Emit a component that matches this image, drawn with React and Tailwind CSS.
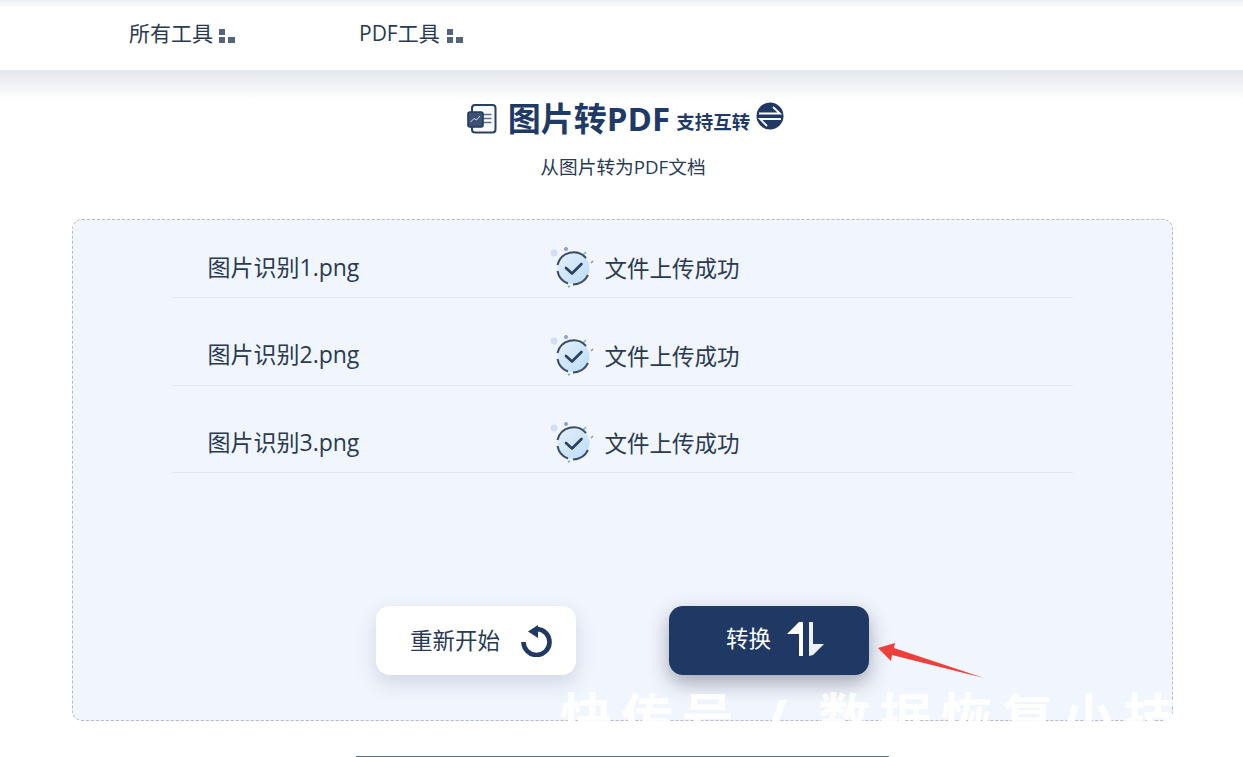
import React from 'react';

const files = ['图片识别1.png', '图片识别2.png', '图片识别3.png'];

const MenuDots = () => (
  <svg width="16" height="15" viewBox="0 0 16 15" className="shrink-0">
    <rect x="0" y="0" width="6" height="6" fill="#56637c" />
    <rect x="0" y="8" width="6" height="6" fill="#56637c" />
    <rect x="9" y="8" width="7" height="6" fill="#56637c" />
  </svg>
);

const DocIcon = () => (
  <svg width="30" height="30" viewBox="0 0 30 30" fill="none">
    <rect x="5" y="1" width="23.5" height="27.5" rx="3" fill="#f8fafc" stroke="#2a3f66" strokeWidth="2" />
    <path d="M16 10.5h8.5M16 14.5h8.5M16 18.5h8.5" stroke="#5d7090" strokeWidth="1.4" />
    <rect x="1" y="8" width="15" height="15" rx="2" fill="#3c5175" stroke="#24385c" strokeWidth="1.6" />
    <path d="M3.5 18l3.5-3.5 2.5 1.5 3.5-4" stroke="#dbe2ee" strokeWidth="1" />
  </svg>
);

const SwapBadge = () => (
  <svg width="28" height="28" viewBox="0 0 28 28">
    <circle cx="14" cy="14" r="13.5" fill="#1f3864" />
    <path d="M3 11.5h21L17 5M25 17H4l7 7" fill="none" stroke="#fff" strokeWidth="1.8" />
  </svg>
);

const SuccessIcon = () => (
  <svg width="46" height="46" viewBox="0 0 46 46" fill="none" className="shrink-0">
    <defs>
      <linearGradient id="okFill" x1="0" y1="0" x2="1" y2="1">
        <stop offset="0" stopColor="#e4f0fc" />
        <stop offset="1" stopColor="#bcdcf8" />
      </linearGradient>
    </defs>
    <circle cx="5" cy="9" r="3.5" fill="#d3ddf3" />
    <circle cx="17" cy="5" r="2" fill="#8c9fd6" />
    <path d="M37 8l-3 3" stroke="#7fb2e0" strokeWidth="1.6" />
    <path d="M44 17l-2 2" stroke="#8a9ab5" strokeWidth="1.6" />
    <circle cx="24.5" cy="24" r="16" fill="url(#okFill)" />
    <path d="M37 14A16.5 16.5 0 0 0 8.5 21M8.5 27A16.5 16.5 0 0 0 19 39.5M24 40.5A16.5 16.5 0 0 0 39 31" stroke="#3d4c66" strokeWidth="2" />
    <path d="M17 24l6 5.5 9.5-9.5" stroke="#2c3e5c" strokeWidth="2.6" strokeLinecap="round" strokeLinejoin="round" />
    <path d="M19 43l2-1" stroke="#6ea6d8" strokeWidth="1.6" />
  </svg>
);

const RestartIcon = () => (
  <svg width="31" height="32" viewBox="0 0 31 32" fill="none">
    <path d="M2.5 17A13 13 0 1 0 16 4" stroke="#1f3864" strokeWidth="4.6" />
    <path d="M7 6.5L17 0v13z" fill="#1f3864" />
  </svg>
);

const ConvertIcon = () => (
  <svg width="37" height="34" viewBox="0 0 37 34">
    <path d="M16 0h-4L0 12h12v22h4z" fill="#fff" />
    <path d="M22 0h4v22h11L26 33l-4 1z" fill="#eef2f8" />
  </svg>
);

const Arrow = () => (
  <svg width="108" height="36" viewBox="0 0 108 36" className="absolute left-[876px] top-[642px]">
    <path d="M2 6L19 1l-1 5 90 30L16 13l-1 6z" fill="#ee3f3a" />
  </svg>
);

export default function App() {
  return (
    <div
      className="relative h-[757px] w-[1243px] overflow-hidden bg-white text-[#2a3a52]"
      style={{ fontFamily: '"Open Sans", "Noto Sans CJK SC", sans-serif' }}
    >
      {/* top nav */}
      <div className="relative h-[70px] bg-gradient-to-b from-[#eceef2] via-white via-[12%] to-white">
        <div className="flex h-full items-center pb-[3px] pl-[129px]">
          <div className="flex w-[230px] items-center gap-[6px] text-[21px] font-normal">
            <span>所有工具</span>
            <div className="mt-[6px]"><MenuDots /></div>
          </div>
          <div className="flex items-center gap-[7px] text-[21px] font-normal">
            <span>PDF工具</span>
            <div className="mt-[6px]"><MenuDots /></div>
          </div>
        </div>
      </div>
      <div className="h-[30px] bg-gradient-to-b from-[#e3e6ed] to-white" />

      {/* title */}
      <div className="-mt-[2px] flex items-center justify-center pl-[8px]">
        <DocIcon />
        <h1 className="ml-[11px] text-[33px] font-bold leading-[42px] text-[#1f3a66]">图片转PDF</h1>
        <span className="ml-[6px] mt-[6px] text-[18.5px] font-bold text-[#1f3a66]">支持互转</span>
        <div className="-mt-[6px] ml-[6px]"><SwapBadge /></div>
      </div>
      <p className="mt-[14px] pl-[3px] text-center text-[18.7px] font-normal leading-[26px]">从图片转为PDF文档</p>

      {/* upload panel */}
      <div className="ml-[72px] mt-[39px] h-[502px] w-[1101px] rounded-[10px] border border-dashed border-[#b4bac6] bg-[#f1f5fd] pt-[17px]">
        <div className="mx-auto flex w-[900px] flex-col gap-[26.5px]">
          {files.map((name) => (
            <div key={name} className="flex h-[61px] items-center border-b border-[#e3e6ec] pl-[35px]">
              <span className="w-[341px] text-[23px] font-normal">{name}</span>
              <SuccessIcon />
              <span className="ml-[10px] mt-[4px] text-[22.5px] font-normal">文件上传成功</span>
            </div>
          ))}
        </div>
        <div className="mt-[133px] flex justify-center gap-[93px] pr-[1px]">
          <button className="flex h-[69px] w-[200px] items-center justify-center gap-[21px] rounded-[14px] bg-white pl-[11px] text-[22.5px] font-normal shadow-[0_8px_20px_rgba(90,105,140,0.22)]">
            <span>重新开始</span>
            <RestartIcon />
          </button>
          <button className="flex h-[69px] w-[200px] items-center justify-center gap-[16px] rounded-[14px] bg-[#1f3864] pb-[4px] pl-[13px] text-[22.5px] text-white shadow-[0_8px_20px_rgba(40,50,70,0.4)]">
            <span className="font-normal">转换</span>
            <ConvertIcon />
          </button>
        </div>
      </div>

      <Arrow />

      {/* watermark */}
      <div className="absolute left-[560px] top-[687px] whitespace-nowrap text-[52px] font-bold leading-[60px] tracking-[9px] text-white/90">
        快传号 / 数据恢复小技
      </div>

      {/* next section edge */}
      <div className="absolute left-[356px] top-[756px] h-[1px] w-[533px] bg-[#56708f]" />
    </div>
  );
}
